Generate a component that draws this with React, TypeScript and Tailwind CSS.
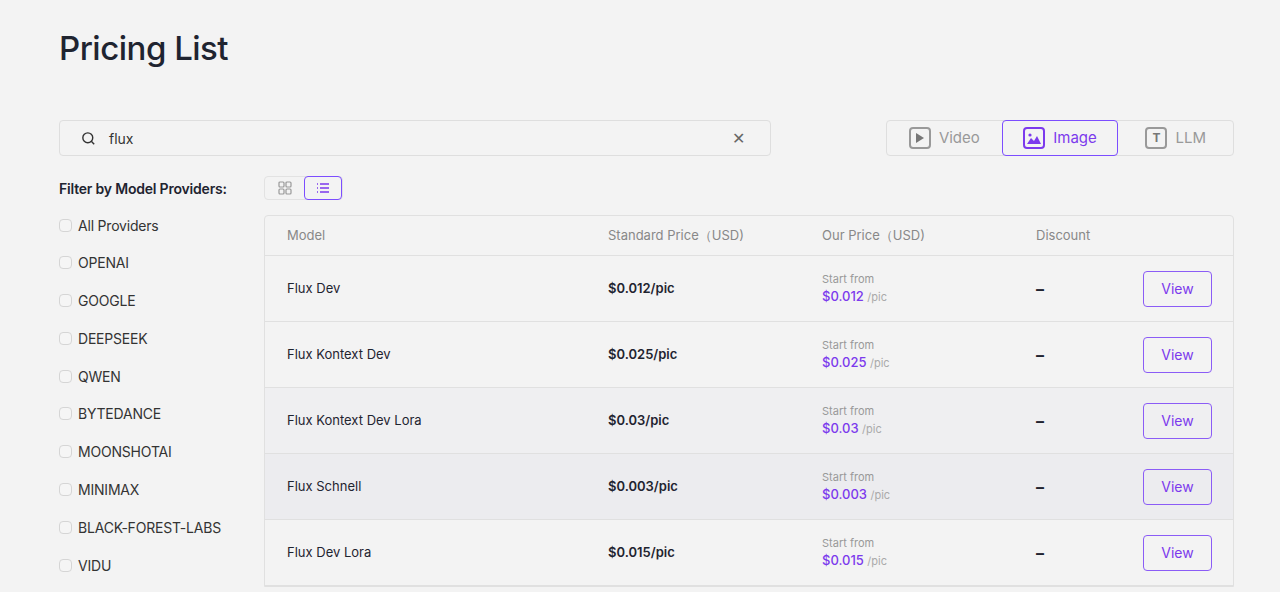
import React from "react";

const providers = ["All Providers","OPENAI","GOOGLE","DEEPSEEK","QWEN","BYTEDANCE","MOONSHOTAI","MINIMAX","BLACK-FOREST-LABS","VIDU"];
const rows = [
  ["Flux Dev","$0.012/pic","$0.012",""],
  ["Flux Kontext Dev","$0.025/pic","$0.025",""],
  ["Flux Kontext Dev Lora","$0.03/pic","$0.03","bg-[#efeff1]"],
  ["Flux Schnell","$0.003/pic","$0.003","bg-[#ececef]"],
  ["Flux Dev Lora","$0.015/pic","$0.015",""],
];

export default function App() {
  return (
    <div className="h-[592px] overflow-hidden bg-[#f3f3f3] text-[#1f2430]" style={{ fontFamily: "Inter, 'Noto Sans', sans-serif" }}>
      <div className="pl-[59px] pr-[46px] pt-[26px]">
        <h1 className="text-[33px] font-medium tracking-[-0.5px] leading-[44px]">Pricing List</h1>
        <div className="mt-[50px] flex justify-between">
          <div className="w-[712px] h-[36px] border border-[#dedede] rounded flex items-center px-[20px]">
            <svg width="17" height="17" viewBox="0 0 24 24" fill="none" stroke="#333" strokeWidth="2"><circle cx="11" cy="11" r="7"/><path d="M20 20l-4-4"/></svg>
            <span className="ml-[12px] text-[14px] text-[#333]">flux</span>
            <span className="ml-auto text-[#666] text-[16px] mr-[5px]">✕</span>
          </div>
          <div className="w-[348px] h-[36px] border border-[#dedede] rounded flex items-center text-[15px] text-[#999]">
            <div className="flex-1 flex items-center justify-center gap-[8px]">
              <span className="w-[22px] h-[22px] border-2 border-[#999] rounded-sm flex items-center justify-center"><svg width="8" height="10" viewBox="0 0 8 10"><path d="M0 0L8 5L0 10Z" fill="#777"/></svg></span>Video
            </div>
            <div className="flex-1 h-[36px] -my-px flex items-center justify-center gap-[8px] border border-[#7c4dff] rounded text-[#7c3aed]">
              <span className="w-[22px] h-[22px] border-2 border-[#7c3aed] rounded-sm flex items-center justify-center"><svg width="14" height="12" viewBox="0 0 14 12"><circle cx="3" cy="3" r="1.6" fill="#7c3aed"/><path d="M0 12L4 6L7 9L10 4L14 12Z" fill="#7c3aed"/></svg></span>Image
            </div>
            <div className="flex-1 flex items-center justify-center gap-[8px]">
              <span className="w-[22px] h-[22px] border-2 border-[#999] rounded-sm flex items-center justify-center text-[12px] font-bold text-[#777]">T</span>LLM
            </div>
          </div>
        </div>
        <div className="mt-[20px] flex gap-[33px]">
          <div className="w-[172px] shrink-0">
            <div className="text-[14px] font-semibold mt-[2px] whitespace-nowrap tracking-[-0.2px]">Filter by Model Providers:</div>
            <div className="mt-[16px] flex flex-col gap-[17.8px]">
              {providers.map(p => (
                <div key={p} className="flex items-center gap-[6px] text-[14px] text-[#333] h-[20px] whitespace-nowrap tracking-[-0.2px]">
                  <span className="w-[13px] h-[13px] border border-[#d5d5d5] rounded-sm bg-[#f5f5f5]" />{p}
                </div>
              ))}
            </div>
          </div>
          <div className="flex-1">
            <div className="flex w-[79px] h-[24px] border border-[#e2e2e2] rounded">
              <div className="w-[40px] flex items-center justify-center">
                <svg width="14" height="14" viewBox="0 0 14 14" fill="none" stroke="#999" strokeWidth="1.2"><rect x="1" y="1" width="5" height="5" rx="1"/><rect x="8" y="1" width="5" height="5" rx="1"/><rect x="1" y="8" width="5" height="5" rx="1"/><rect x="8" y="8" width="5" height="5" rx="1"/></svg>
              </div>
              <div className="w-[38px] -m-px h-[24px] border border-[#7c4dff] rounded flex items-center justify-center">
                <svg width="14" height="12" viewBox="0 0 14 12" stroke="#7c3aed" strokeWidth="1.4"><path d="M1 2h1M1 6h1M1 10h1M4 2h9M4 6h9M4 10h9"/></svg>
              </div>
            </div>
            <div className="mt-[15px] border border-[#e0e0e0] rounded-t">
              <div className="h-[40px] flex items-center text-[13px] text-[#888] border-b border-[#e0e0e0]">
                <div className="w-[343px] pl-[22px]">Model</div>
                <div className="w-[214px]">Standard Price（USD)</div>
                <div className="w-[214px]">Our Price（USD)</div>
                <div>Discount</div>
              </div>
              {rows.map(r => (
                <div key={r[0]} className={`h-[66px] flex items-center border-b border-[#e0e0e0] ${r[3]}`}>
                  <div className="w-[343px] pl-[22px] text-[13px]">{r[0]}</div>
                  <div className="w-[214px] text-[13px] font-semibold">{r[1]}</div>
                  <div className="w-[214px]">
                    <div className="text-[11px] text-[#999]">Start from</div>
                    <div className="text-[13px] font-medium text-[#7c3aed]">{r[2]} <span className="text-[11px] text-[#aaa] font-normal">/pic</span></div>
                  </div>
                  <div className="w-[107px] font-bold">–</div>
                  <div className="w-[69px] h-[36px] border border-[#8b5cf6] rounded text-[#7c3aed] text-[14px] flex items-center justify-center">View</div>
                </div>
              ))}
            </div>
          </div>
        </div>
      </div>
    </div>
  );
}
